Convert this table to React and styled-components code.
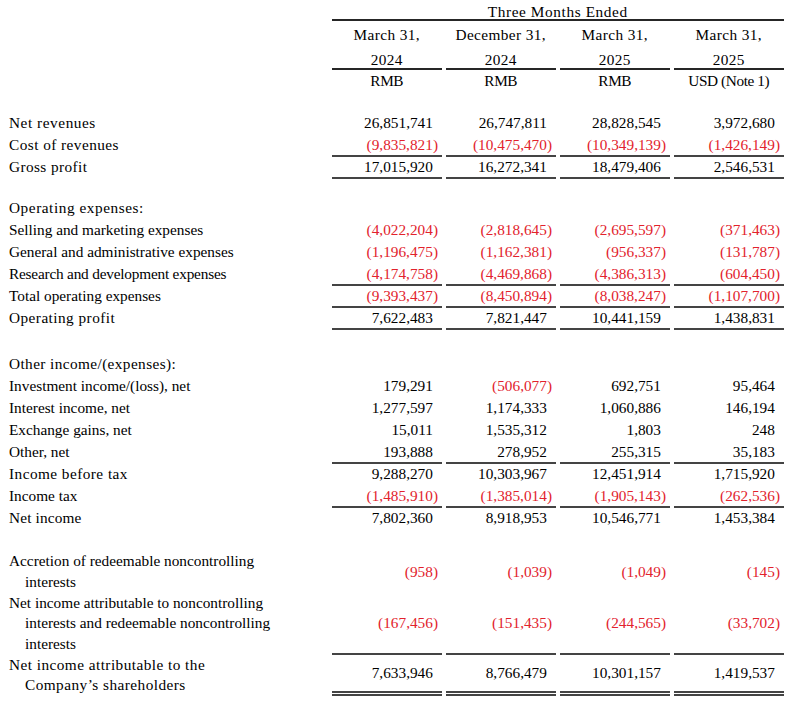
import React from "react";
import styled, { createGlobalStyle } from "styled-components";

const Global = createGlobalStyle`
  html, body { margin: 0; padding: 0; background: #ffffff; }
  body { font-family: "Liberation Serif", "Times New Roman", serif; font-size: 15.3px; color: #000; }
`;

const RED = "#e2222c";
const LINE = "#444444";
const DARK = "#262626";

const Page = styled.div`
  padding: 0 0 0 9px;
  width: 790px;
  box-sizing: border-box;
`;

const Grid = styled.div`
  display: grid;
  grid-template-columns: 318.5px repeat(4, 109.5px);
  column-gap: 4.5px;
  height: ${(p) => (p.$h ? `${p.$h}px` : "auto")};
`;

const Spacer = styled.div`
  height: ${(p) => p.$h}px;
`;

const Blank = styled.div``;

const PeriodHead = styled.div`
  grid-column: 2 / -1;
  box-sizing: border-box;
  height: 21px;
  padding-top: 3px;
  line-height: 17px;
  text-align: center;
  letter-spacing: 0.6px;
  border-bottom: 2px solid ${DARK};
`;

const DateHead = styled.div`
  box-sizing: border-box;
  height: 49px;
  padding-top: 2.4px;
  line-height: 24.3px;
  text-align: center;
  letter-spacing: 0.4px;
  border-bottom: 2px solid ${DARK};
  white-space: nowrap;
`;

const UnitHead = styled.div`
  box-sizing: border-box;
  height: 20px;
  padding-top: 2.3px;
  line-height: 17px;
  text-align: center;
  letter-spacing: -0.4px;
  white-space: nowrap;
`;

const Label = styled.div`
  padding-top: ${(p) => (p.$multi ? 0 : 1)}px;
  line-height: ${(p) => (p.$multi ? "20.67px" : "21px")};
  letter-spacing: ${(p) => p.$ls || 0}px;
  white-space: nowrap;
`;

const LabelLine = styled.span`
  display: block;
  padding-left: ${(p) => (p.$indent ? 16 : 0)}px;
`;

const Value = styled.div`
  box-sizing: border-box;
  display: flex;
  justify-content: flex-end;
  align-items: ${(p) => (p.$multi ? "center" : "flex-start")};
  padding-top: ${(p) => (p.$multi ? 0 : 1)}px;
  line-height: 21px;
  padding-right: ${(p) => (p.$neg ? 3.5 : 8.6)}px;
  color: ${(p) => (p.$neg ? RED : "#000")};
  white-space: nowrap;
  border-bottom: ${(p) =>
    p.$rule === "single"
      ? `2px solid ${LINE}`
      : p.$rule === "double"
      ? `5px double ${LINE}`
      : "none"};
`;

const headers = [
  ["March 31,", "2024", "RMB"],
  ["December 31,", "2024", "RMB"],
  ["March 31,", "2025", "RMB"],
  ["March 31,", "2025", "USD (Note 1)"],
];

const rows = [
  { label: ["Net revenues"], ls: 0.55, values: ["26,851,741", "26,747,811", "28,828,545", "3,972,680"] },
  { label: ["Cost of revenues"], ls: 0.45, values: ["(9,835,821)", "(10,475,470)", "(10,349,139)", "(1,426,149)"], rule: "single" },
  { label: ["Gross profit"], ls: 0.4, values: ["17,015,920", "16,272,341", "18,479,406", "2,546,531"], rule: "single" },
  { spacer: 19 },
  { label: ["Operating expenses:"], ls: 0.55 },
  { label: ["Selling and marketing expenses"], values: ["(4,022,204)", "(2,818,645)", "(2,695,597)", "(371,463)"] },
  { label: ["General and administrative expenses"], values: ["(1,196,475)", "(1,162,381)", "(956,337)", "(131,787)"] },
  { label: ["Research and development expenses"], ls: -0.2, values: ["(4,174,758)", "(4,469,868)", "(4,386,313)", "(604,450)"], rule: "single" },
  { label: ["Total operating expenses"], values: ["(9,393,437)", "(8,450,894)", "(8,038,247)", "(1,107,700)"], rule: "single" },
  { label: ["Operating profit"], ls: 0.45, values: ["7,622,483", "7,821,447", "10,441,159", "1,438,831"], rule: "single" },
  { spacer: 23.7 },
  { label: ["Other income/(expenses):"], ls: 0.4 },
  { label: ["Investment income/(loss), net"], values: ["179,291", "(506,077)", "692,751", "95,464"] },
  { label: ["Interest income, net"], values: ["1,277,597", "1,174,333", "1,060,886", "146,194"] },
  { label: ["Exchange gains, net"], values: ["15,011", "1,535,312", "1,803", "248"] },
  { label: ["Other, net"], values: ["193,888", "278,952", "255,315", "35,183"], rule: "single" },
  { label: ["Income before tax"], ls: 0.45, values: ["9,288,270", "10,303,967", "12,451,914", "1,715,920"] },
  { label: ["Income tax"], values: ["(1,485,910)", "(1,385,014)", "(1,905,143)", "(262,536)"], rule: "single" },
  { label: ["Net income"], ls: 0.15, values: ["7,802,360", "8,918,953", "10,546,771", "1,453,384"] },
  { spacer: 23.2 },
  { label: ["Accretion of redeemable noncontrolling", "interests"], values: ["(958)", "(1,039)", "(1,049)", "(145)"] },
  {
    label: ["Net income attributable to noncontrolling", "interests and redeemable noncontrolling", "interests"],
    values: ["(167,456)", "(151,435)", "(244,565)", "(33,702)"],
    rule: "single",
  },
  {
    label: ["Net income attributable to the", "Company\u2019s shareholders"],
    ls: 0.45,
    values: ["7,633,946", "8,766,479", "10,301,157", "1,419,537"],
    rule: "double",
    h: 41.5,
  },
];

function DataRow({ row }) {
  const multi = row.label.length > 1;
  const values = row.values || [null, null, null, null];
  return (
    <Grid $h={multi ? row.h || row.label.length * 20.67 : 22}>
      <Label $multi={multi} $ls={row.ls}>
        {row.label.map((l, i) => (
          <LabelLine key={i} $indent={i > 0}>
            {l}
          </LabelLine>
        ))}
      </Label>
      {values.map((v, i) => (
        <Value key={i} $multi={multi} $neg={v && v.startsWith("(")} $rule={row.rule}>
          {v}
        </Value>
      ))}
    </Grid>
  );
}

export default function App() {
  return (
    <Page>
      <Global />
      <Grid>
        <Blank />
        <PeriodHead>Three Months Ended</PeriodHead>
      </Grid>
      <Grid>
        <Blank />
        {headers.map((h, i) => (
          <DateHead key={i}>
            {h[0]}
            <br />
            {h[1]}
          </DateHead>
        ))}
      </Grid>
      <Grid>
        <Blank />
        {headers.map((h, i) => (
          <UnitHead key={i}>{h[2]}</UnitHead>
        ))}
      </Grid>
      <Spacer $h={21.3} />
      {rows.map((r, i) =>
        r.spacer ? <Spacer key={i} $h={r.spacer} /> : <DataRow key={i} row={r} />
      )}
    </Page>
  );
}
